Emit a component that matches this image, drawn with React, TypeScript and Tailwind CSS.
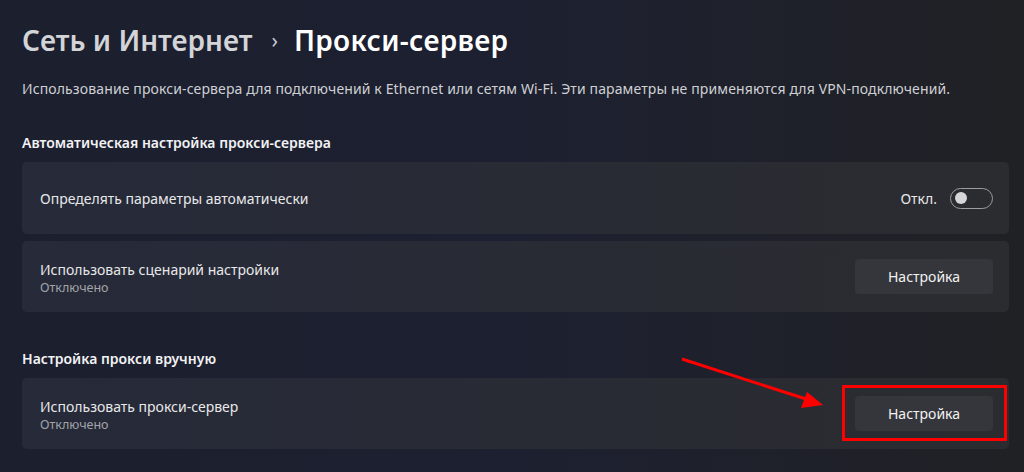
const font = { fontFamily: '"Noto Sans", "Open Sans", sans-serif' };

function SettingButton() {
  return (
    <button className="flex h-[35px] w-[138px] items-center justify-center rounded-[4px] bg-[#35363b] text-[14px] text-[#f2f2f2]">
      Настройка
    </button>
  );
}

function Row({ title, sub, children, className = "" }: { title: string; sub?: string; children: React.ReactNode; className?: string }) {
  return (
    <div className={`flex h-[71px] items-center justify-between rounded-[5px] bg-gradient-to-r from-[#262a39] to-[#2b2c30] pl-[18px] pr-[16px] ${className}`}>
      <div className={`flex flex-col ${sub ? "pt-[3px]" : "pt-[2px]"}`}>
        <span className="text-[14px] leading-[20px] text-[#e8e8ea]">{title}</span>
        {sub && <span className="text-[12.5px] leading-[16px] text-[#a3a4a9]">{sub}</span>}
      </div>
      {children}
    </div>
  );
}

export default function App() {
  return (
    <div
      className="relative h-[472px] w-[1024px] overflow-hidden bg-gradient-to-r from-[#1b1f2e] via-[#1d2030] to-[#202125] pl-[22px] pr-[15px] pt-[20px]"
      style={font}
    >
      <div className="flex h-[40px] items-center text-[28px] font-semibold leading-[40px]">
        <span className="text-[#d3d4d8]">Сеть и Интернет</span>
        <span className="ml-[19px] mr-[16px] text-[21px] font-normal text-[#c9cad0]">›</span>
        <span className="text-white tracking-[0.3px]">Прокси-сервер</span>
      </div>
      <p className="mt-[19px] text-[14px] leading-[20px] tracking-[0.12px] text-[#cfd0d4]">
        Использование прокси-сервера для подключений к Ethernet или сетям Wi-Fi. Эти параметры не применяются для VPN-подключений.
      </p>
      <h2 className="mt-[34px] text-[14px] font-semibold leading-[20px] text-[#f2f2f4]">
        Автоматическая настройка прокси-сервера
      </h2>
      <Row title="Определять параметры автоматически" className="mt-[9px] h-[72px]">
        <div className="flex items-center gap-[13px]">
          <span className="text-[14px] text-[#e8e8ea]">Откл.</span>
          <div className="flex h-[21px] w-[43px] items-center rounded-full border border-[#9c9da2] pl-[4px]">
            <div className="h-[12px] w-[12px] rounded-full bg-[#d6d6d8]" />
          </div>
        </div>
      </Row>
      <Row title="Использовать сценарий настройки" sub="Отключено" className="mt-[7px]">
        <SettingButton />
      </Row>
      <h2 className="mt-[37px] text-[14px] font-semibold leading-[20px] text-[#f2f2f4]">
        Настройка прокси вручную
      </h2>
      <Row title="Использовать прокси-сервер" sub="Отключено" className="mt-[9px]">
        <SettingButton />
      </Row>

      <div className="absolute left-[842px] top-[385px] h-[56px] w-[165px] border-[3px] border-[#ff0000]" />
      <svg className="absolute left-0 top-0" width="1024" height="472">
        <line x1="682" y1="359" x2="806" y2="399" stroke="#ff0000" strokeWidth="3" />
        <polygon points="823,405 801,408 807,392" fill="#ff0000" />
      </svg>
    </div>
  );
}
